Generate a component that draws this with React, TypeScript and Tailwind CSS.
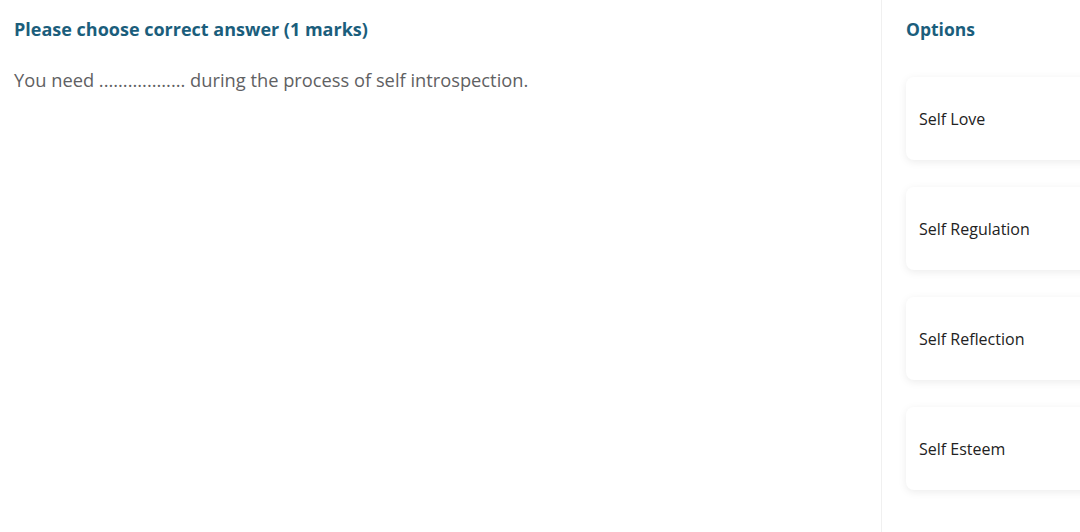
const options = ["Self Love", "Self Regulation", "Self Reflection", "Self Esteem"];

export default function App() {
  return (
    <div className="flex h-[532px] w-[1080px] overflow-hidden bg-white font-['Open_Sans',sans-serif]">
      <div className="w-[881px] shrink-0 px-[14px] pt-[17px]">
        <h1 className="text-[18px] font-bold leading-[24px] text-[#1b5e7c]">Please choose correct answer (1 marks)</h1>
        <p className="mt-[27px] text-[18.3px] leading-[24px] text-[#5f6163]">
          You need .................. during the process of self introspection.
        </p>
      </div>
      <div className="min-w-0 flex-1 border-l border-[#f0f0f0] pl-[24px] pt-[17px]">
        <h2 className="text-[17.5px] font-bold leading-[24px] text-[#1b5e7c]">Options</h2>
        <div className="mt-[36px] flex w-[220px] flex-col gap-[27px]">
          {options.map((o) => (
            <div
              key={o}
              className="flex h-[83px] items-center rounded-[8px] bg-white pl-[13px] text-[16px] text-[#222] shadow-[0_2px_8px_rgba(0,0,0,0.08)]"
            >
              {o}
            </div>
          ))}
        </div>
      </div>
    </div>
  );
}
